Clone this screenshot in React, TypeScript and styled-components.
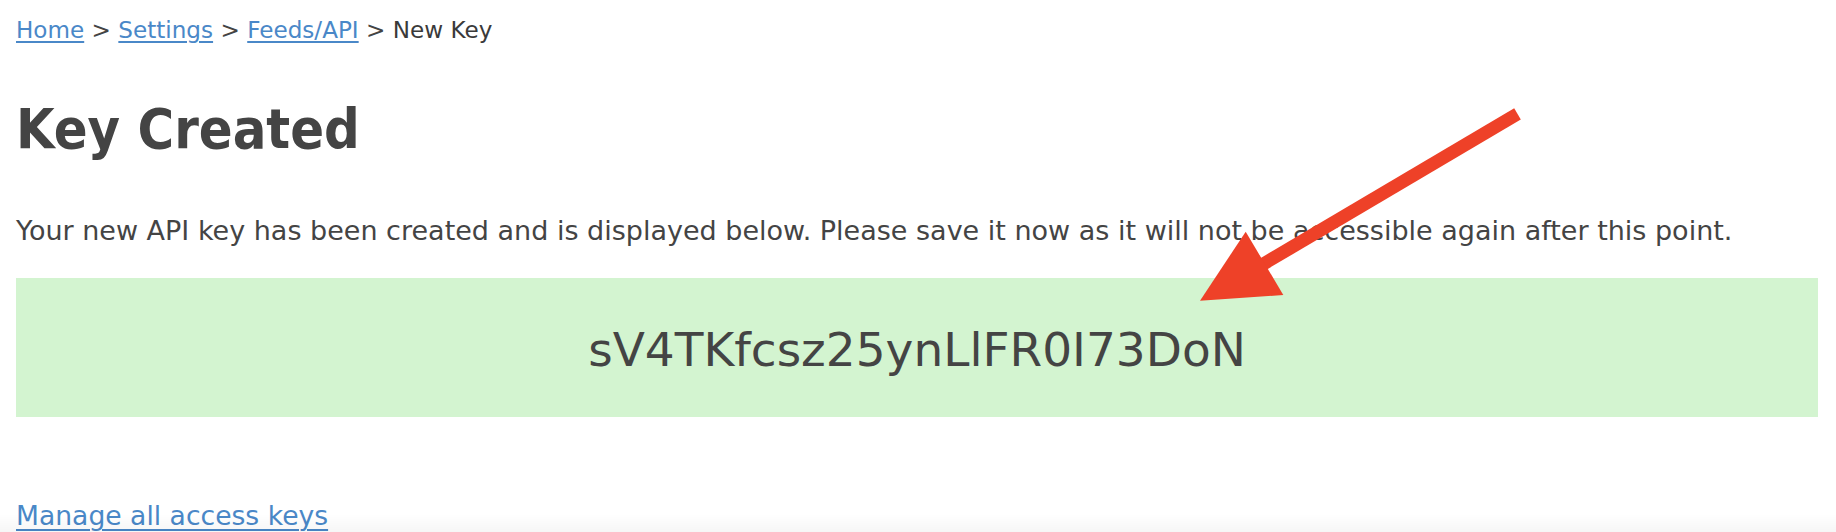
import React from "react";
import styled, { createGlobalStyle } from "styled-components";

const GlobalStyle = createGlobalStyle`
  html, body { margin: 0; padding: 0; background: #ffffff; }
  body {
    font-family: "DejaVu Sans", Verdana, sans-serif;
    color: #444444;
    overflow: hidden;
  }
`;

const Page = styled.main`
  position: relative;
  width: 1836px;
  height: 532px;
  box-sizing: border-box;
  padding: 16px 18px 0 16px;
  display: flex;
  flex-direction: column;
`;

const Crumbs = styled.nav`
  font-size: 23.1px;
  line-height: 28px;
  display: flex;
  gap: 0.32em;
  white-space: pre;
`;

const Link = styled.a`
  color: #4a88c8;
  text-decoration: underline;
  text-underline-offset: 3px;
  text-decoration-thickness: 2px;
  cursor: pointer;
`;

const Sep = styled.span`
  color: #444444;
`;

const Current = styled.span`
  color: #3a3a3a;
`;

const Title = styled.h1`
  margin: 53px 0 0 0;
  font-family: "DejaVu Sans Condensed", "DejaVu Sans", sans-serif;
  font-weight: 700;
  font-size: 55.5px;
  line-height: 64px;
  color: #444444;
`;

const Notice = styled.p`
  margin: 54px 0 0 0;
  font-size: 27px;
  line-height: 32px;
  white-space: nowrap;
`;

const KeyBox = styled.div`
  margin-top: 31px;
  height: 140px;
  box-sizing: border-box;
  padding-top: 4px;
  background: #d3f4d0;
  display: flex;
  align-items: center;
  justify-content: center;
`;

const KeyText = styled.code`
  font-family: "DejaVu Sans", Verdana, sans-serif;
  font-size: 47px;
  line-height: normal;
  color: #444444;
  letter-spacing: 0;
`;

const Footer = styled.div`
  margin-top: 83px;
  font-size: 26.6px;
  line-height: 32px;
`;

const FooterLink = styled(Link)`
  text-underline-offset: 4px;
`;

const Fade = styled.div`
  position: fixed;
  left: 0;
  right: 0;
  bottom: 0;
  height: 18px;
  background: linear-gradient(to bottom, rgba(0, 0, 0, 0), rgba(0, 0, 0, 0.035));
  pointer-events: none;
`;

const Annotation = styled.svg`
  position: absolute;
  left: 0;
  top: 0;
  width: 1836px;
  height: 532px;
  pointer-events: none;
  z-index: 2;
`;

export default function App() {
  return (
    <>
      <GlobalStyle />
      <Page>
        <Crumbs>
          <Link>Home</Link>
          <Sep>&gt;</Sep>
          <Link>Settings</Link>
          <Sep>&gt;</Sep>
          <Link>Feeds/API</Link>
          <Sep>&gt;</Sep>
          <Current>New Key</Current>
        </Crumbs>
        <Title>Key Created</Title>
        <Notice>
          Your new API key has been created and is displayed below. Please save it now as it
          will not be accessible again after this point.
        </Notice>
        <KeyBox>
          <KeyText>sV4TKfcsz25ynLlFR0I73DoN</KeyText>
        </KeyBox>
        <Footer>
          <FooterLink>Manage all access keys</FooterLink>
        </Footer>
        <Annotation viewBox="0 0 1836 532">
          <line
            x1="1517.5"
            y1="113.8"
            x2="1262"
            y2="264.8"
            stroke="#ee4128"
            strokeWidth="13"
            strokeLinecap="butt"
          />
          <polygon points="1200,300.7 1245.7,231.7 1283.3,295" fill="#ee4128" />
        </Annotation>
      </Page>
      <Fade />
    </>
  );
}
